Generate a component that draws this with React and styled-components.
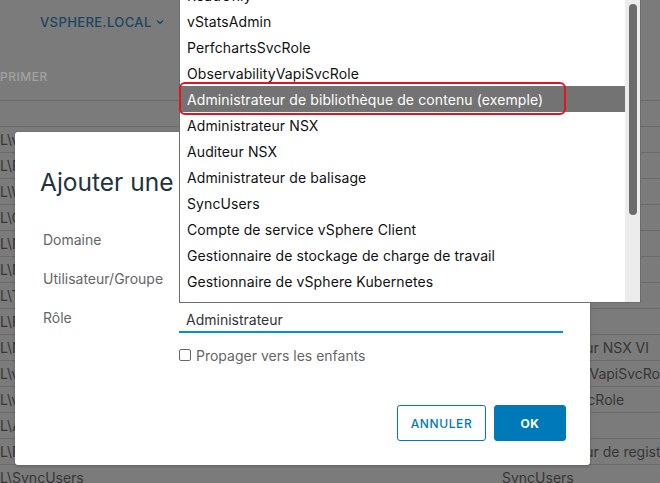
import React from 'react';
import styled, { createGlobalStyle } from 'styled-components';

const GlobalStyle = createGlobalStyle`
  html, body {
    margin: 0;
    padding: 0;
    overflow: hidden;
  }
  body {
    font-family: Inter, "Noto Sans", sans-serif;
  }
  * {
    box-sizing: border-box;
  }
`;

const Page = styled.div`
  position: relative;
  width: 660px;
  height: 483px;
  overflow: hidden;
  background: #7b7b7b;
  color: #363636;
`;

const Header = styled.div`
  height: 44px;
  display: flex;
  align-items: center;
  padding-left: 40px;
`;

const Tab = styled.div`
  display: flex;
  align-items: center;
  gap: 4px;
  color: #1c4560;
  font-size: 13px;
  font-weight: 500;
  letter-spacing: 0.4px;
`;

const TableHead = styled.div`
  margin-top: 9px;
  height: 48px;
  display: flex;
  align-items: center;
  border-bottom: 1px solid #6a6a6a;
  color: #a2a2a2;
  font-size: 12px;
  font-weight: 500;
  letter-spacing: 0.5px;
`;

const Row = styled.div`
  height: 26px;
  display: grid;
  grid-template-columns: 502px 1fr;
  align-items: center;
  border-bottom: 1px solid #6a6a6a;
  font-size: 14px;
  white-space: nowrap;
  overflow: hidden;
`;

const Cell = styled.div`
  overflow: hidden;
`;

const Modal = styled.div`
  position: absolute;
  left: 15px;
  top: 132px;
  width: 575px;
  height: 333px;
  background: #fff;
  border-radius: 3px;
  box-shadow: 0 1px 3px rgba(0, 0, 0, 0.25);
  padding: 34px 24px 24px 28px;
  display: flex;
  flex-direction: column;
`;

const Title = styled.h3`
  margin: 0 0 0 -3px;
  font-size: 24.5px;
  font-weight: 400;
  line-height: 32px;
  color: #21333b;
  white-space: nowrap;
`;

const Form = styled.div`
  margin-top: 22px;
  display: grid;
  grid-template-columns: 136px 384px;
  grid-auto-rows: 39px;
  align-items: center;
`;

const Label = styled.div`
  font-size: 14px;
  color: #666;
`;

const Field = styled.div`
  height: 26px;
  display: flex;
  align-items: center;
  padding-left: 7px;
  font-size: 14px;
  color: #333;
  border-bottom: 2px solid ${({ focused }) => (focused ? '#0092d1' : '#9a9a9a')};
  margin-top: 5px;
`;

const CheckRow = styled.label`
  grid-column: 2;
  display: flex;
  align-items: center;
  gap: 5px;
  font-size: 14px;
  color: #666;
  margin-top: -3px;
`;

const Box = styled.span`
  width: 12px;
  height: 12px;
  border: 1px solid #666;
  border-radius: 2px;
`;

const Footer = styled.div`
  margin-top: auto;
  display: flex;
  justify-content: flex-end;
  gap: 8px;
`;

const Button = styled.button`
  height: 36px;
  padding: 0 12px;
  min-width: ${({ primary }) => (primary ? '72px' : '89px')};
  border-radius: 3px;
  border: 1px solid #0079b8;
  background: ${({ primary }) => (primary ? '#0079b8' : '#fff')};
  color: ${({ primary }) => (primary ? '#fff' : '#0079b8')};
  font-family: inherit;
  font-size: 12px;
  font-weight: ${({ primary }) => (primary ? 700 : 500)};
  letter-spacing: 0.6px;
`;

const Dropdown = styled.div`
  position: absolute;
  left: 179px;
  top: 0;
  width: 462px;
  height: 303px;
  background: #fff;
  border: 1px solid #6c6c6c;
  border-top: none;
  display: flex;
  overflow: hidden;
`;

const List = styled.ul`
  flex: 1;
  list-style: none;
  margin: -18px 0 0;
  padding: 0;
`;

const Item = styled.li`
  height: 26px;
  display: flex;
  align-items: center;
  padding-left: 7px;
  font-size: 14px;
  letter-spacing: 0.1px;
  white-space: nowrap;
  color: ${({ active }) => (active ? '#fff' : '#111')};
  background: ${({ active }) => (active ? '#737373' : 'transparent')};
`;

const Track = styled.div`
  width: 15px;
  background: #ececec;
  padding: 4px 3px 0 4px;
`;

const Thumb = styled.div`
  height: 211px;
  border-radius: 4px;
  background: #6b6b6b;
`;

const Highlight = styled.div`
  position: absolute;
  left: 179px;
  top: 82px;
  width: 387px;
  height: 33px;
  border: 2px solid #e5131b;
  border-radius: 6px;
  pointer-events: none;
`;

const rows = [
  ['', ''],
  ['L\\vStatsAdmin', ''],
  ['L\\PerfchartsSvcRole', ''],
  ['L\\WorkloadStorage', ''],
  ['L\\ContentLibrary', ''],
  ['L\\NsxAdministrators', ''],
  ['L\\NsxAuditors', ''],
  ['L\\TaggingAdmins', ''],
  ['L\\ReadOnly', ''],
  ['L\\NsxViAdministrators', 'Administrateur NSX VI'],
  ['L\\vpxd-extension', 'ObservabilityVapiSvcRole'],
  ['L\\vsphere-webclient', 'PerfchartsSvcRole'],
  ['L\\Administrators', ''],
  ['L\\RegistryAdmins', 'Administrateur de registre'],
  ['L\\SyncUsers', 'SyncUsers'],
];

const roles = [
  'ReadOnly',
  'vStatsAdmin',
  'PerfchartsSvcRole',
  'ObservabilityVapiSvcRole',
  'Administrateur de bibliothèque de contenu (exemple)',
  'Administrateur NSX',
  'Auditeur NSX',
  'Administrateur de balisage',
  'SyncUsers',
  'Compte de service vSphere Client',
  'Gestionnaire de stockage de charge de travail',
  'Gestionnaire de vSphere Kubernetes',
];

export default function App() {
  return (
    <Page>
      <GlobalStyle />
      <Header>
        <Tab>
          VSPHERE.LOCAL
          <svg width="8" height="6" viewBox="0 0 8 6">
            <path d="M1 1.5 L4 4.5 L7 1.5" fill="none" stroke="#1c4560" strokeWidth="1.3" />
          </svg>
        </Tab>
      </Header>
      <TableHead>PRIMER</TableHead>
      {rows.map(([a, b], i) => (
        <Row key={i}>
          <Cell>{a}</Cell>
          <Cell>{b}</Cell>
        </Row>
      ))}

      <Modal>
        <Title>Ajouter une autorisation</Title>
        <Form>
          <Label>Domaine</Label>
          <Field>vsphere.local</Field>
          <Label>Utilisateur/Groupe</Label>
          <Field />
          <Label>Rôle</Label>
          <Field focused>Administrateur</Field>
          <CheckRow>
            <Box />
            Propager vers les enfants
          </CheckRow>
        </Form>
        <Footer>
          <Button>ANNULER</Button>
          <Button primary>OK</Button>
        </Footer>
      </Modal>

      <Dropdown>
        <List>
          {roles.map((r, i) => (
            <Item key={r} active={i === 4}>{r}</Item>
          ))}
        </List>
        <Track>
          <Thumb />
        </Track>
      </Dropdown>
      <Highlight />
    </Page>
  );
}
